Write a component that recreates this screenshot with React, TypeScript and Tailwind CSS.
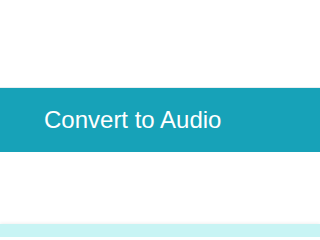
export default function App() {
  return (
    <div className="flex h-[237px] w-full flex-col overflow-hidden bg-white font-['Liberation_Sans',Arial,sans-serif]">
      <div className="h-[87px] shrink-0" />
      <div className="h-px shrink-0 bg-[#e8eef0]" />
      <button
        type="button"
        className="flex h-[64px] w-full shrink-0 items-center bg-[#17a2b8] pl-[44px] text-left text-[24px] leading-none text-white"
      >
        Convert to Audio
      </button>
      <div className="h-[72px] shrink-0" />
      <div className="flex-1 bg-[#c8f4f4] shadow-[0_-1px_3px_rgba(0,0,0,0.06)]" />
    </div>
  );
}
